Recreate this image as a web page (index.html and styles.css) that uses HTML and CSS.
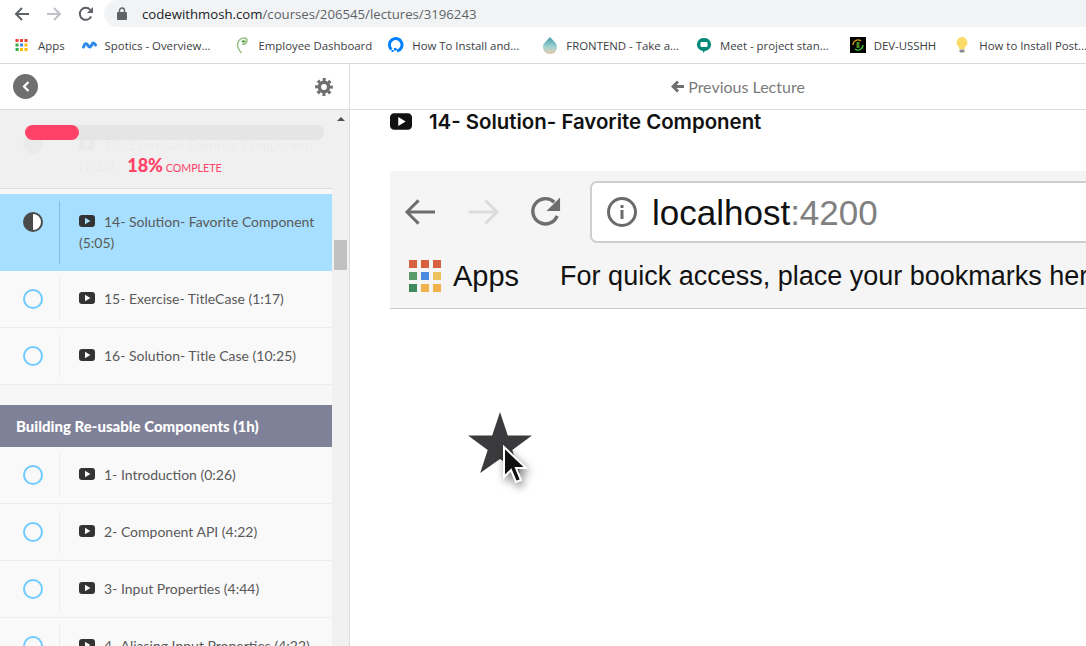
FILE: index.html
```html
<!DOCTYPE html>
<html lang="en">

<head>
    <meta charset="UTF-8">
    <title>14- Solution- Favorite Component | Code with Mosh</title>
    <link rel="stylesheet" href="styles.css">
</head>

<body>
    <!-- icons reused below -->
    <svg class="defs" width="0" height="0">
        <symbol id="play" viewBox="0 0 16 12">
            <path fill-rule="evenodd" d="M3 0h10a3 3 0 0 1 3 3v6a3 3 0 0 1-3 3H3a3 3 0 0 1-3-3V3a3 3 0 0 1 3-3zM6 2.700v6.600L11.400 6z" />
        </symbol>
        <linearGradient id="drop" x1="0" y1="0" x2="0" y2="1">
            <stop offset="0.100" stop-color="#4fa6b5" />
            <stop offset="0.600" stop-color="#a6d3cf" />
            <stop offset="1" stop-color="#e8c9a8" />
        </linearGradient>
    </svg>

    <header class="chrome">
        <div class="toolbar">
            <svg class="nav-icon" width="16" height="16" viewBox="0 0 16 16"><path d="M15 8H2M8 2L2 8l6 6" fill="none" stroke="#5f6368" stroke-width="2" /></svg>
            <svg class="nav-icon" width="16" height="16" viewBox="0 0 16 16"><path d="M1 8h13M8 2l6 6-6 6" fill="none" stroke="#bdc1c6" stroke-width="2" /></svg>
            <svg class="nav-icon" width="16" height="16" viewBox="0 0 16 16"><path d="M13.200 10.500A6 6 0 1 1 12.300 3.800" fill="none" stroke="#5f6368" stroke-width="2" /><path d="M15 1v6H9z" fill="#5f6368" /></svg>
            <div class="omnibox">
                <svg width="10" height="13" viewBox="0 0 10 13"><path fill="#5f6368" d="M1 5h8a1 1 0 0 1 1 1v6a1 1 0 0 1-1 1H1a1 1 0 0 1-1-1V6a1 1 0 0 1 1-1z" /><path d="M2.500 5V3.500a2.500 2.500 0 0 1 5 0V5" fill="none" stroke="#5f6368" stroke-width="1.400" /></svg>
                <span class="url"><b>codewithmosh.com</b>/courses/206545/lectures/3196243</span>
            </div>
        </div>
        <nav class="bookmarks">
            <a class="bookmark bm-apps">
                <svg width="14" height="14" viewBox="0 0 14 14">
                    <rect width="3" height="3" x="0.500" y="1" fill="#ea4335" /><rect width="3" height="3" x="5" y="1" fill="#ea4335" /><rect width="3" height="3" x="9.500" y="1" fill="#ea4335" />
                    <rect width="3" height="3" x="0.500" y="5.500" fill="#34a853" /><rect width="3" height="3" x="5" y="5.500" fill="#4285f4" /><rect width="3" height="3" x="9.500" y="5.500" fill="#fbbc05" />
                    <rect width="3" height="3" x="0.500" y="10" fill="#34a853" /><rect width="3" height="3" x="5" y="10" fill="#fbbc05" /><rect width="3" height="3" x="9.500" y="10" fill="#fbbc05" />
                </svg>Apps</a>
            <a class="bookmark bm-spotics">
                <svg width="15" height="8" viewBox="0 0 15 8"><path d="M1.500 6C3 2 4.500 2 6 4.500S9 6 10 3.500s2.500-1.500 3.500.5" fill="none" stroke="#2b8ae8" stroke-width="3" stroke-linecap="round" /></svg>Spotics - Overview...</a>
            <a class="bookmark bm-employee">
                <svg width="14" height="17" viewBox="0 0 14 17"><path d="M6.500 16C3 12 1.500 7 4 3.500S12 .5 12 3.500s-3 4.500-5 3.500" fill="none" stroke="#9cc08a" stroke-width="1.500" /><path d="M6 4c2-1 4-1 5 0-1 2-3 2-4 1z" fill="#5f9e4a" /></svg>Employee Dashboard</a>
            <a class="bookmark bm-install">
                <svg width="16" height="16" viewBox="0 0 16 16"><path d="M3.500 12.500A6.300 6.300 0 1 1 9 14" fill="none" stroke="#0080ff" stroke-width="3" /><rect x="6" y="11" width="2.600" height="2.600" fill="#0080ff" /><rect x="3.500" y="13" width="2" height="2" fill="#0080ff" /><rect x="1.500" y="11.500" width="1.500" height="1.500" fill="#0080ff" /></svg>How To Install and...</a>
            <a class="bookmark bm-frontend">
                <svg width="16" height="17" viewBox="0 0 16 17"><path d="M8 0l6 6.500a7 7 0 1 1-12 0z" fill="url(#drop)" /></svg>FRONTEND - Take a...</a>
            <a class="bookmark bm-meet">
                <svg width="14" height="15" viewBox="0 0 14 15"><path d="M7 0a6.500 6.500 0 0 1 1 13l-2 2v-2A6.500 6.500 0 0 1 7 0z" fill="#00897b" /><rect x="3.500" y="4" width="7" height="5" rx="1.200" fill="#fff" /></svg>Meet - project stan...</a>
            <a class="bookmark bm-dev">
                <svg width="16" height="16" viewBox="0 0 16 16"><rect width="16" height="16" fill="#000" /><path d="M3 8a5 5 0 0 1 8-4" fill="none" stroke="#d9a514" stroke-width="1.300" /><path d="M13 8a5 5 0 0 1-8 4" fill="none" stroke="#37c837" stroke-width="1.300" /><rect x="6.500" y="5" width="3" height="6" fill="#4c8a1e" /></svg>DEV-USSHH</a>
            <a class="bookmark bm-post">
                <svg width="14" height="16" viewBox="0 0 14 16"><path d="M7 0a5.500 5.500 0 0 1 3 10v2H4v-2A5.500 5.500 0 0 1 7 0z" fill="#fbdc6a" /><rect x="4.500" y="12.500" width="5" height="3" rx="1" fill="#8a8a8a" /></svg>How to Install Post...</a>
        </nav>
    </header>

    <div class="app">
        <aside class="sidebar">
            <div class="side-head">
                <span class="back-btn">
                    <svg width="8" height="11" viewBox="0 0 8 11"><path d="M6.500 1L2 5.500 6.500 10" fill="none" stroke="#fff" stroke-width="2.200" /></svg>
                </span>
                <svg class="gear" width="18" height="18" viewBox="0 0 18 18">
                    <circle cx="9" cy="9" r="4.700" fill="none" stroke="#6f6f6f" stroke-width="3.600" />
                    <circle cx="9" cy="9" r="7.300" fill="none" stroke="#6f6f6f" stroke-width="3.200" stroke-dasharray="3 2.730" stroke-dashoffset="1.500" />
                </svg>
            </div>
            <div class="side-body">
                <div class="course">
                    <section class="progress-panel">
                        <div class="ghost-row">
                            <span class="ghost-check"></span>
                            <span class="ghost-text"><svg class="play"><use href="#play" /></svg>13- Exercise- Favorite Component<br>(1:22)</span>
                        </div>
                        <div class="progress-track"><div class="progress-fill" style="width: 18%"></div></div>
                        <div class="progress-label"><strong>18%</strong> COMPLETE</div>
                    </section>

                    <ul class="lectures">
                        <li class="lecture active">
                            <div class="status">
                                <svg width="20" height="20" viewBox="0 0 20 20"><circle cx="10" cy="10" r="9" fill="#fff" stroke="#4a4a4a" stroke-width="2" /><path d="M10 1a9 9 0 0 0 0 18z" fill="#4a4a4a" /></svg>
                            </div>
                            <div class="lecture-name"><svg class="play"><use href="#play" /></svg>14- Solution- Favorite Component (5:05)</div>
                        </li>
                        <li class="lecture"><div class="status"><span class="ring"></span></div><div class="lecture-name"><svg class="play"><use href="#play" /></svg>15- Exercise- TitleCase (1:17)</div></li>
                        <li class="lecture"><div class="status"><span class="ring"></span></div><div class="lecture-name"><svg class="play"><use href="#play" /></svg>16- Solution- Title Case (10:25)</div></li>
                    </ul>

                    <h3 class="section-title">Building Re-usable Components (1h)</h3>
                    <ul class="lectures">
                        <li class="lecture"><div class="status"><span class="ring"></span></div><div class="lecture-name"><svg class="play"><use href="#play" /></svg>1- Introduction (0:26)</div></li>
                        <li class="lecture"><div class="status"><span class="ring"></span></div><div class="lecture-name"><svg class="play"><use href="#play" /></svg>2- Component API (4:22)</div></li>
                        <li class="lecture"><div class="status"><span class="ring"></span></div><div class="lecture-name"><svg class="play"><use href="#play" /></svg>3- Input Properties (4:44)</div></li>
                        <li class="lecture"><div class="status"><span class="ring"></span></div><div class="lecture-name"><svg class="play"><use href="#play" /></svg>4- Aliasing Input Properties (4:22)</div></li>
                    </ul>
                </div>
                <div class="scrollbar">
                    <span class="scroll-arrow"></span>
                    <span class="scroll-thumb"></span>
                </div>
            </div>
        </aside>

        <main class="content">
            <div class="content-head">
                <svg width="13" height="13" viewBox="0 0 13 13"><path d="M7 1.500L2 6.500l5 5M2.500 6.500H13" fill="none" stroke="#6f6f6f" stroke-width="3" /></svg>
                Previous Lecture
            </div>
            <div class="lecture-body">
                <h2 class="lecture-title"><svg class="play-big"><use href="#play" /></svg>14- Solution- Favorite Component</h2>

                <!-- the screenshot inside the lecture -->
                <figure class="shot">
                    <div class="shot-toolbar">
                        <svg width="34" height="30" viewBox="0 0 34 30"><path d="M32 15H3M15 3L3 15l12 12" fill="none" stroke="#6e6e6e" stroke-width="3" /></svg>
                        <svg width="34" height="30" viewBox="0 0 34 30"><path d="M2 15h29M19 3l12 12-12 12" fill="none" stroke="#dcdcdc" stroke-width="3" /></svg>
                        <svg width="34" height="34" viewBox="0 0 34 34"><path d="M28 21A13 13 0 1 1 25 7" fill="none" stroke="#6e6e6e" stroke-width="3.500" /><path d="M31 2v14H17z" fill="#6e6e6e" /></svg>
                        <div class="shot-url">
                            <svg width="32" height="32" viewBox="0 0 32 32"><circle cx="16" cy="16" r="13.500" fill="none" stroke="#6a6a6a" stroke-width="3" /><rect x="14.500" y="14" width="3" height="9" fill="#6a6a6a" /><rect x="14.500" y="9" width="3" height="3" fill="#6a6a6a" /></svg>
                            <span class="shot-host">localhost<em>:4200</em></span>
                        </div>
                    </div>
                    <div class="shot-bookmarks">
                        <svg class="shot-apps" width="32" height="32" viewBox="0 0 32 32">
                            <rect width="8" height="8" x="0" y="0" fill="#d9603f" /><rect width="8" height="8" x="12" y="0" fill="#d9603f" /><rect width="8" height="8" x="24" y="0" fill="#d9603f" />
                            <rect width="8" height="8" x="0" y="12" fill="#5b9a6b" /><rect width="8" height="8" x="12" y="12" fill="#4a8be0" /><rect width="8" height="8" x="24" y="12" fill="#ecc25f" />
                            <rect width="8" height="8" x="0" y="24" fill="#3f8a5c" /><rect width="8" height="8" x="12" y="24" fill="#f0b24a" /><rect width="8" height="8" x="24" y="24" fill="#f0b24a" />
                        </svg>
                        <span class="shot-apps-label">Apps</span>
                        <span class="shot-hint">For quick access, place your bookmarks here on the bookmarks bar.</span>
                    </div>
                </figure>

                <div class="demo">
                    <svg class="demo-star" width="66" height="62" viewBox="0 0 66 62"><path d="M33 1l7.800 23.500H65L45.300 39l7.500 23L33 48 13.200 62l7.500-23L1 24.500h24.200z" fill="#3b3b3d" /></svg>
                    <svg class="demo-cursor" width="28" height="42" viewBox="0 0 28 42"><path d="M4 2v30l7-7 5 12 5-2-5-12h10z" fill="#111" stroke="#fff" stroke-width="2" /></svg>
                </div>
            </div>
        </main>
    </div>
</body>

</html>
```

FILE: styles.css
```css
* {
    margin: 0;
    padding: 0;
    box-sizing: border-box;
}

html,
body {
    height: 646px;
    overflow: hidden;
}

body {
    display: flex;
    flex-direction: column;
    background: #fff;
    font-family: "Lato", sans-serif;
}

.defs {
    position: absolute;
}

/* browser chrome */
.chrome {
    flex: none;
    height: 64px;
    border-bottom: 1px solid #dadada;
}

.toolbar {
    display: flex;
    align-items: center;
    height: 27px;
    padding-left: 14px;
}

.nav-icon {
    flex: none;
    margin-right: 16px;
}

.omnibox {
    display: flex;
    align-items: center;
    flex: 1;
    height: 27px;
    margin-left: -6px;
    padding-left: 13px;
    background: #f1f3f4;
    border-radius: 14px 0 0 14px;
}

.url {
    margin-left: 15px;
    font-family: "Open Sans", sans-serif;
    font-size: 13.200px;
    color: #5f6368;
    white-space: nowrap;
}

.url b {
    font-weight: 400;
    color: #202124;
}

.bookmarks {
    display: flex;
    align-items: center;
    height: 36px;
    font-family: "Open Sans", sans-serif;
    font-size: 11.400px;
    color: #3c4043;
}

.bookmark {
    display: flex;
    align-items: center;
    flex: none;
    gap: 9px;
    white-space: nowrap;
}

.bm-apps { margin-left: 15px; }
.bm-spotics { margin-left: 17px; gap: 8px; }
.bm-employee { margin-left: 25px; }
.bm-install { margin-left: 16px; gap: 8px; }
.bm-frontend { margin-left: 23px; gap: 8px; }
.bm-meet { margin-left: 18px; }
.bm-dev { margin-left: 21px; gap: 8px; }
.bm-post { margin-left: 19px; gap: 10px; }

/* page under the chrome */
.app {
    display: flex;
    flex: 1;
    min-height: 0;
}

.sidebar {
    display: flex;
    flex-direction: column;
    flex: none;
    width: 350px;
    border-right: 1px solid #dcdcdc;
}

.side-head {
    display: flex;
    align-items: center;
    justify-content: space-between;
    flex: none;
    height: 46px;
    padding: 0 16px 0 13px;
    border-bottom: 1px solid #dcdcdc;
}

.back-btn {
    display: flex;
    align-items: center;
    justify-content: center;
    width: 25px;
    height: 25px;
    border-radius: 50%;
    background: #6f6f6f;
}

.side-body {
    display: flex;
    flex: 1;
    min-height: 0;
    overflow: hidden;
}

.course {
    flex: none;
    width: 332px;
    background: #f7f7f7;
}

.progress-panel {
    position: relative;
    height: 79px;
    margin-bottom: 5px;
    background: #f0f0f0;
    border-bottom: 1px solid #dcdcdc;
    overflow: hidden;
}

.ghost-row {
    position: absolute;
    top: 24px;
    left: 23px;
    display: flex;
    gap: 36px;
    opacity: 0.025;
    font-size: 14px;
    line-height: 21px;
    color: #333;
    white-space: nowrap;
}

.ghost-check {
    flex: none;
    width: 20px;
    height: 20px;
    border-radius: 50%;
    background: #333;
}

.progress-track {
    position: relative;
    height: 15px;
    margin: 15px 8px 0 25px;
    border-radius: 8px;
    background: #e5e5e5;
}

.progress-fill {
    height: 100%;
    border-radius: 8px;
    background: #ff4267;
}

.progress-label {
    position: relative;
    margin-top: 14px;
    padding-left: 17px;
    text-align: center;
    font-size: 10.700px;
    color: #ff4267;
}

.progress-label strong {
    font-size: 18px;
    font-weight: 900;
}

.lectures {
    list-style: none;
}

.lecture {
    display: flex;
    min-height: 57px;
    padding: 7px 0;
    background: #f9f9f9;
    border-bottom: 1px solid #ececec;
}

.lecture.active {
    min-height: 77px;
    background: #a6dfff;
    border-bottom: none;
}

.status {
    display: flex;
    justify-content: center;
    align-items: center;
    flex: none;
    width: 60px;
    padding-left: 6px;
    border-right: 1px solid #ececec;
}

.lecture.active .status {
    align-items: flex-start;
    padding-top: 11px;
    border-right-color: #85bcd9;
}

.ring {
    width: 20px;
    height: 20px;
    border: 2px solid #6fcbff;
    border-radius: 50%;
}

.lecture-name {
    flex: 1;
    padding: 10px 10px 0 19px;
    font-size: 14px;
    line-height: 21px;
    color: #5a5a5a;
    white-space: nowrap;
    overflow: hidden;
}

.lecture.active .lecture-name {
    white-space: normal;
}

.play {
    width: 16px;
    height: 12px;
    margin-right: 9px;
    fill: #333;
}

.section-title {
    margin-top: 20px;
    height: 42px;
    padding-left: 16px;
    background: #7f8199;
    color: #fff;
    font-size: 15px;
    font-weight: 900;
    line-height: 42px;
}

.scrollbar {
    position: relative;
    flex: 1;
    background: #f1f1f1;
}

.scroll-arrow {
    position: absolute;
    top: 7px;
    left: 5px;
    border: 4px solid transparent;
    border-top: 0;
    border-bottom: 4px solid #505050;
}

.scroll-thumb {
    position: absolute;
    top: 130px;
    left: 2px;
    width: 13px;
    height: 30px;
    background: #c1c1c1;
}

/* lecture column */
.content {
    flex: 1;
    min-width: 0;
}

.content-head {
    display: flex;
    align-items: center;
    justify-content: center;
    gap: 4px;
    height: 46px;
    padding-left: 40px;
    border-bottom: 1px solid #dcdcdc;
    font-size: 16px;
    color: #7b7b7b;
}

.lecture-body {
    padding: 0 0 0 40px;
    overflow: hidden;
}

.lecture-title {
    display: flex;
    align-items: center;
    height: 22px;
    font-family: "Inter", sans-serif;
    font-size: 20.400px;
    font-weight: 600;
    color: #111;
    white-space: nowrap;
}

.play-big {
    width: 22px;
    height: 17px;
    margin-right: 17px;
    fill: #111;
}

.shot {
    width: 760px;
    height: 138px;
    margin-top: 39px;
    background: #f5f5f5;
    border-bottom: 1px solid #c9c9c9;
    overflow: hidden;
}

.shot-toolbar {
    display: flex;
    align-items: center;
    gap: 30px;
    height: 81px;
    padding: 0 0 0 14px;
}

.shot-url {
    display: flex;
    align-items: center;
    gap: 14px;
    flex: none;
    width: 560px;
    height: 62px;
    margin-left: -3px;
    padding-left: 14px;
    background: #fff;
    border: 2px solid #cfcfcf;
    border-radius: 7px;
}

.shot-host {
    padding-top: 3px;
    font-family: "Liberation Sans", sans-serif;
    font-size: 35px;
    color: #111;
}

.shot-host em {
    font-style: normal;
    color: #808080;
}

.shot-bookmarks {
    display: flex;
    align-items: center;
    height: 48px;
    padding-left: 19px;
    font-family: "Liberation Sans", sans-serif;
    font-size: 29px;
    color: #111;
    white-space: nowrap;
}

.shot-apps {
    flex: none;
    margin-right: 12px;
}

.shot-hint {
    margin-left: 41px;
    font-size: 27px;
}

.demo {
    position: relative;
    height: 200px;
}

.demo-star {
    position: absolute;
    top: 102px;
    left: 77px;
    filter: blur(0.5px);
}

.demo-cursor {
    position: absolute;
    top: 136px;
    left: 110px;
    filter: drop-shadow(2px 4px 4px rgba(0, 0, 0, 0.5)) blur(0.5px);
}
```
